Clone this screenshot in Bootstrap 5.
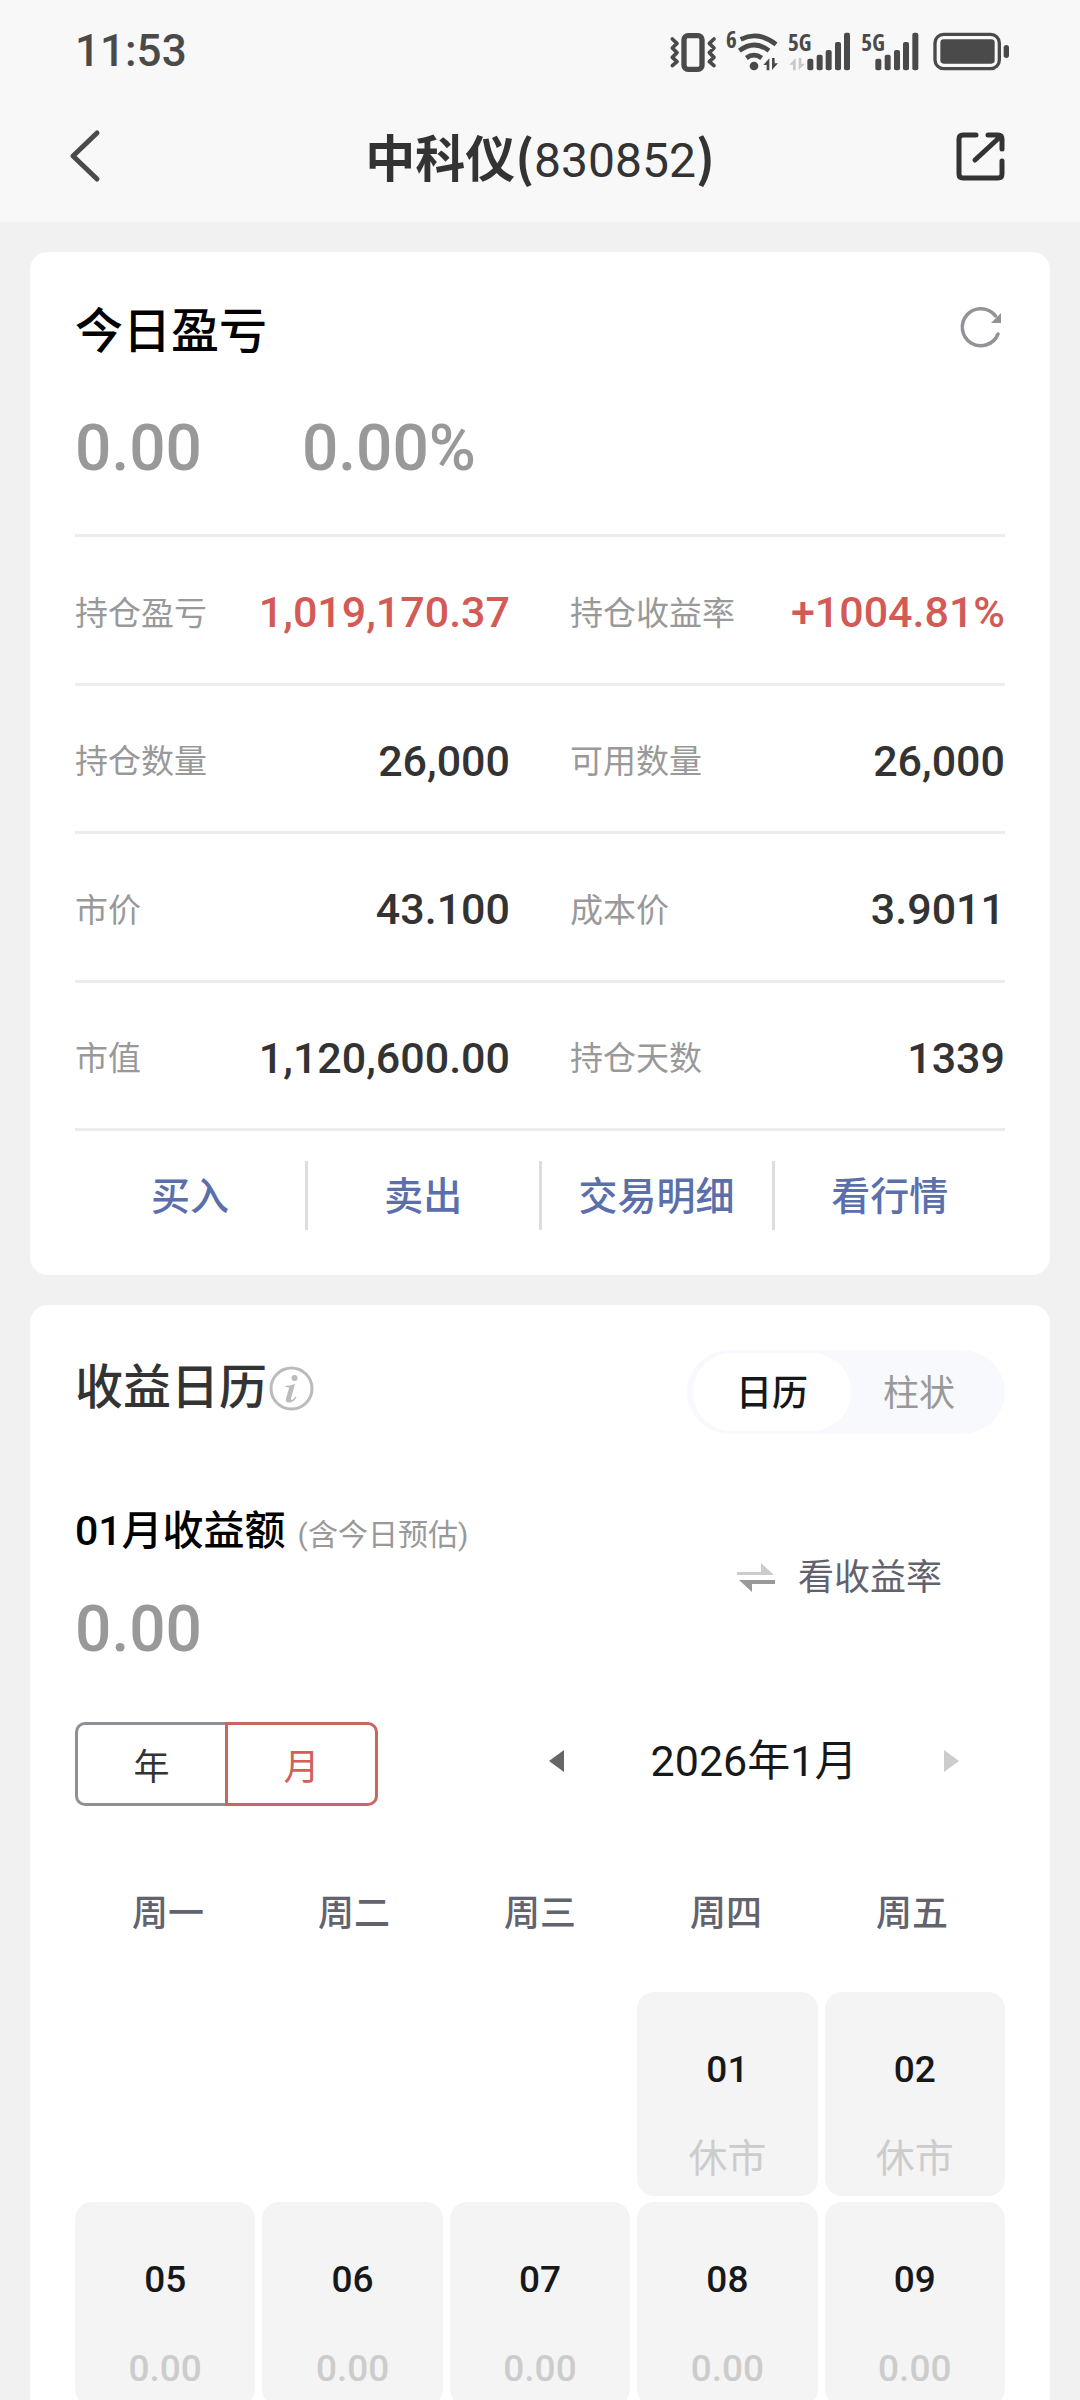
<!DOCTYPE html>
<html lang="zh-CN">
<head>
<meta charset="utf-8">
<meta name="viewport" content="width=device-width, initial-scale=1">
<title>中科仪(830852)</title>
<link href="https://cdn.jsdelivr.net/npm/bootstrap@5.3.0/dist/css/bootstrap.min.css" rel="stylesheet">
<style>
body{background:#f1f1f1;color:#333;font-family:Roboto,"Noto Sans CJK SC",sans-serif}
button{padding:0;border:0;background:none;color:inherit;font:inherit}
a{text-decoration:none}
svg{display:block;overflow:visible}
.topbar{background:#f8f8f8}
.statusbar{height:102px;padding:0 71px 0 75px;color:#4a4a4a;font-size:44px;font-weight:500}
.statusbar .glyphs{gap:10px}
.statusbar text{font-family:"Open Sans Condensed",Roboto,sans-serif;font-weight:700;font-size:70px;fill:#4a4a4a}
.titlebar{height:120px;padding:0 75px 8px 70px}
.titlebar h1{font-size:50px;line-height:60px;font-family:"Noto Sans CJK SC",sans-serif;font-weight:700}
.titlebar h1 span{font-family:Roboto,sans-serif;font-size:48px;font-weight:400}
.scroller{padding:30px;scrollbar-width:none}
.scroller::-webkit-scrollbar{display:none}
.panel{background:#fff;border-radius:18px;padding:45px;margin-bottom:30px}
.panel-title{font-size:48px;font-weight:500;line-height:70px}
.refresh{padding:10px 4px}
.big{font-size:64px;line-height:80px;font-weight:500;color:#999}
.today{gap:100px;margin-top:42px;padding-bottom:45px}
.facts{min-height:594px}
.facts dl{border-top:3px solid #ebecec;gap:60px;padding-top:5px}
.facts dt{font-size:33px;font-weight:400;color:#999;padding-top:2px}
.facts dd{font-size:43px;font-weight:500}
.facts .rise{color:#d35a55}
.actions{border-top:3px solid #ebecec;padding-top:30px}
.actions a{flex:1 1 0;height:69px;line-height:72px;font-size:39px;font-weight:500;color:#5a6fab;text-align:center;white-space:nowrap}
.actions a:not(:last-child){border-right:3px solid #ddd}
.cal-title{line-height:76px;gap:2px}
.switcher{background:#f7f9fc;border-radius:42px;height:84px;padding:3px 18px 3px 6px;font-size:36px;color:#999}
.switcher button{width:136px;padding-top:3px}
.switcher .on{width:158px;background:#fff;border-radius:39px;color:#17181a;font-weight:500}
.summary{margin-top:67px}
.summary h3{font-size:41px;line-height:60px;font-weight:500;color:#000;margin:0 0 29px}
.summary small{font-size:30px;line-height:1;font-weight:400;color:#999;margin-left:12px}
.rate{gap:22px;margin:0 63px 16px 0;font-size:36px;color:#61626e}
.period{margin-top:52px}
.units{height:84px;font-size:36px}
.units button{width:150px;border:3px solid #8f9096;border-radius:10px 0 0 10px;padding-top:7px}
.units button:first-child{border-right:0}
.units .on{width:153px;border-color:#c96662;color:#d0605c;border-radius:0 10px 10px 0}
.month{width:410px;margin:0 46px 6px 0;font-size:43px;color:#17181a}
.week{margin-top:81px;margin-bottom:51px;font-size:36px;line-height:54px;font-weight:500;color:#62636f}
.week div{flex:1 1 0;text-align:center}
.days{display:grid;grid-template-columns:repeat(5,1fr);gap:6px 7px}
.day{background:#f4f4f4;border-radius:17px;padding:53px 0 12px;text-align:center;line-height:50px;font-size:37px;color:#17181a;font-weight:500}
.day span{display:block;margin-top:39px;color:#ccc}
.day .closed{font-size:39px;font-weight:400}
.thursday{grid-column-start:4}
</style>
<script src="https://cdn.jsdelivr.net/npm/bootstrap@5.3.0/dist/js/bootstrap.bundle.min.js"></script>
</head>
<body class="vh-100 d-flex flex-column overflow-hidden">
<header class="topbar flex-shrink-0">
  <div class="statusbar d-flex align-items-center justify-content-between">
    <span>11:53</span>
    <div class="glyphs d-flex align-items-center">
      <svg width="46" height="44" viewBox="90 54 138 132" fill="none" stroke="#4a4a4a"><rect x="132" y="74" width="54" height="101" rx="12" stroke-width="16"/><path d="M97 84l14 13-14 14 14 14-14 14 14 13-14 12M222 84l-14 13 14 14-14 14 14 14-14 13 14 12" stroke-width="11" stroke-linecap="round" stroke-linejoin="round"/></svg>
      <svg width="52" height="44" viewBox="258 54 156 132"><g fill="none" stroke="#4a4a4a" stroke-width="14"><path d="M302 85q54-26 106 15"/><path d="M298 119q45-34 89 0"/><path d="M319 141q23-17 46 0"/></g><circle cx="342" cy="165" r="13" fill="#4a4a4a"/><path d="M370 162l18-20v36h-8v-16zM414 157l-18 20v-36h8v16z" fill="#4a4a4a"/><text x="258" y="110">6</text></svg>
      <svg width="64" height="44" viewBox="444 54 192 132"><g fill="#4a4a4a"><text x="444" y="120">5G</text><rect x="502" y="143" width="18" height="35" rx="6"/><rect x="530" y="131" width="18" height="47" rx="6"/><rect x="557" y="117" width="18" height="61" rx="6"/><rect x="585" y="93" width="18" height="85" rx="6"/><rect x="612" y="65" width="18" height="113" rx="6"/></g><path d="M448 161l19-19v36h-8v-17zM495 158l-19 19v-36h8v17z" fill="#c8c8c8"/></svg>
      <svg width="61" height="44" viewBox="666 54 183 132" fill="#4a4a4a"><text x="664" y="120">5G</text><rect x="706" y="143" width="18" height="35" rx="6"/><rect x="734" y="131" width="18" height="47" rx="6"/><rect x="762" y="117" width="18" height="61" rx="6"/><rect x="789" y="93" width="18" height="85" rx="6"/><rect x="817" y="65" width="18" height="113" rx="6"/></svg>
      <svg width="76" height="44" viewBox="879 54 228 132"><rect x="885" y="70" width="193" height="103" rx="26" fill="none" stroke="#4a4a4a" stroke-width="10"/><rect x="901" y="85" width="163" height="73" rx="10" fill="#4a4a4a"/><rect x="1091" y="102" width="16" height="39" rx="8" fill="#4a4a4a"/></svg>
    </div>
  </div>
  <div class="titlebar d-flex align-items-center justify-content-between">
    <button type="button" class="mb-1" aria-label="返回"><svg width="54" height="52" viewBox="0 0 54 52" fill="none" stroke="#4a4a4a" stroke-width="5" stroke-linecap="round" stroke-linejoin="round"><path d="M27 3L3 26l24 23"/></svg></button>
    <h1 class="m-0">中科仪(<span>830852</span>)</h1>
    <button type="button" class="mb-1" aria-label="分享"><svg width="49" height="49" viewBox="0 0 49 49" fill="none" stroke="#333" stroke-width="5" stroke-linecap="round" stroke-linejoin="round"><path d="M20 3H7q-4 0-4 4v35q0 4 4 4h35q4 0 4-4V29"/><path d="M32 3h10q4 0 4 4v10M45 4L19 28"/></svg></button>
  </div>
</header>

<main class="scroller flex-fill overflow-auto">
  <section class="panel">
    <div class="d-flex justify-content-between align-items-start">
      <h2 class="panel-title m-0 text-black">今日盈亏</h2>
      <button type="button" class="refresh" aria-label="刷新"><svg width="40" height="40" viewBox="0 0 40 40"><path d="M37 27A18.500 18.500 0 1 1 34.500 9" fill="none" stroke="#929298" stroke-width="3.500" stroke-linecap="round"/><path d="M40 6v10H30z" fill="#929298"/></svg></button>
    </div>
    <div class="today big d-flex"><span>0.00</span><span>0.00%</span></div>
    <div class="facts d-flex flex-column">
      <dl class="d-flex flex-fill m-0">
        <div class="d-flex align-items-center justify-content-between w-50"><dt>持仓盈亏</dt><dd class="m-0 rise">1,019,170.37</dd></div>
        <div class="d-flex align-items-center justify-content-between w-50"><dt>持仓收益率</dt><dd class="m-0 rise">+1004.81%</dd></div>
      </dl>
      <dl class="d-flex flex-fill m-0">
        <div class="d-flex align-items-center justify-content-between w-50"><dt>持仓数量</dt><dd class="m-0">26,000</dd></div>
        <div class="d-flex align-items-center justify-content-between w-50"><dt>可用数量</dt><dd class="m-0">26,000</dd></div>
      </dl>
      <dl class="d-flex flex-fill m-0">
        <div class="d-flex align-items-center justify-content-between w-50"><dt>市价</dt><dd class="m-0">43.100</dd></div>
        <div class="d-flex align-items-center justify-content-between w-50"><dt>成本价</dt><dd class="m-0">3.9011</dd></div>
      </dl>
      <dl class="d-flex flex-fill m-0">
        <div class="d-flex align-items-center justify-content-between w-50"><dt>市值</dt><dd class="m-0">1,120,600.00</dd></div>
        <div class="d-flex align-items-center justify-content-between w-50"><dt>持仓天数</dt><dd class="m-0">1339</dd></div>
      </dl>
    </div>
    <nav class="actions d-flex"><a href="#">买入</a><a href="#">卖出</a><a href="#">交易明细</a><a href="#">看行情</a></nav>
  </section>

  <section class="panel">
    <div class="d-flex justify-content-between align-items-start">
      <h2 class="panel-title cal-title m-0 d-flex align-items-center">收益日历<svg width="45" height="45" viewBox="0 0 45 45"><circle cx="22.500" cy="22.500" r="20.500" fill="none" stroke="#bbb" stroke-width="3"/><circle cx="25.500" cy="12" r="3" fill="#bbb"/><path d="M16 20q5 0 10-2l-4 14q-.5 2.500 1 2t3.500-3.500l1 1q-3.500 5-7.500 5t-3-4l3-10q.5-1.500-3-1.500z" fill="#bbb"/></svg></h2>
      <div class="switcher d-flex"><button type="button" class="on">日历</button><button type="button">柱状</button></div>
    </div>
    <div class="summary d-flex justify-content-between align-items-center">
      <div>
        <h3>01月收益额<small>(含今日预估)</small></h3>
        <div class="big">0.00</div>
      </div>
      <button type="button" class="rate d-flex align-items-center"><svg width="39" height="29" viewBox="0 0 39 29"><path d="M0 9h24V0l13 12H0z" fill="#ccc"/><path d="M38 17H2l13 12v-8h23z" fill="#999"/></svg>看收益率</button>
    </div>
    <div class="period d-flex justify-content-between align-items-center">
      <div class="units d-flex"><button type="button">年</button><button type="button" class="on">月</button></div>
      <div class="month d-flex justify-content-between align-items-center">
        <button type="button" aria-label="上个月"><svg width="15" height="22" viewBox="0 0 15 22"><path d="M15 0v22L0 11z" fill="#666"/></svg></button>
        <span>2026年1月</span>
        <button type="button" aria-label="下个月"><svg width="15" height="22" viewBox="0 0 15 22"><path d="M0 0v22l15-11z" fill="#ccc"/></svg></button>
      </div>
    </div>
    <div class="week d-flex"><div>周一</div><div>周二</div><div>周三</div><div>周四</div><div>周五</div></div>
    <div class="days">
      <div class="day thursday">01<span class="closed">休市</span></div>
      <div class="day">02<span class="closed">休市</span></div>
      <div class="day">05<span>0.00</span></div>
      <div class="day">06<span>0.00</span></div>
      <div class="day">07<span>0.00</span></div>
      <div class="day">08<span>0.00</span></div>
      <div class="day">09<span>0.00</span></div>
    </div>
  </section>
</main>
</body>
</html>
